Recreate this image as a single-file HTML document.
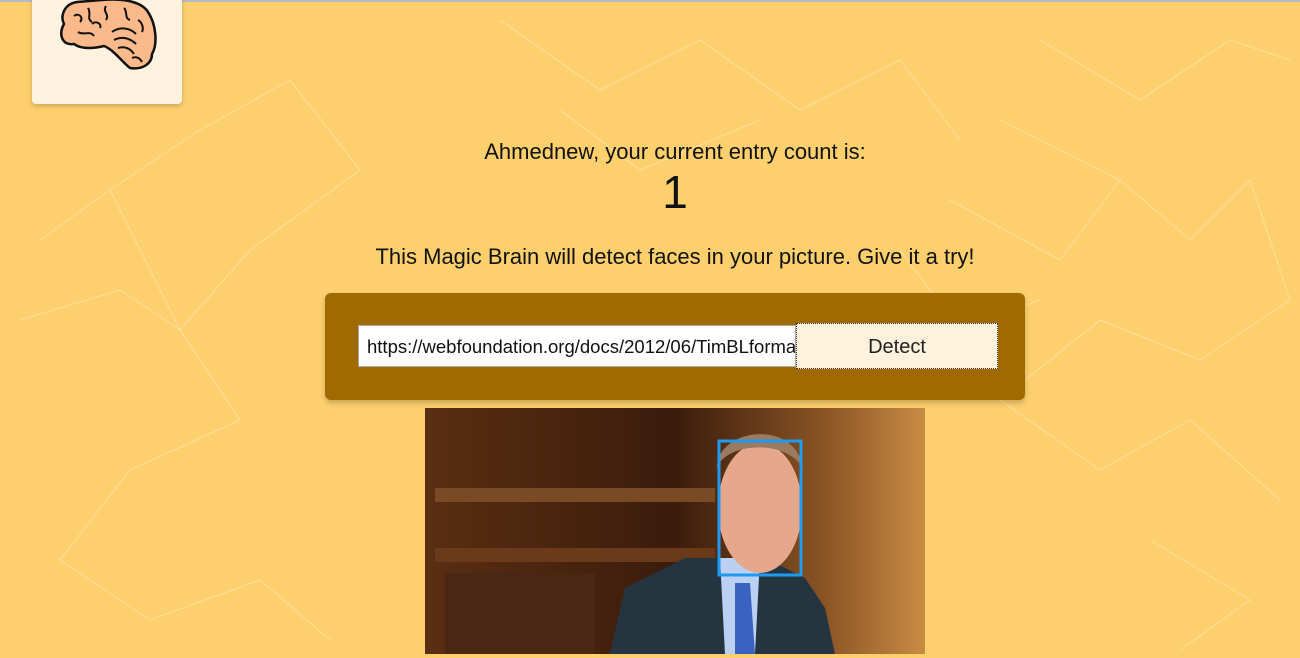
<!DOCTYPE html>
<html><head><meta charset="utf-8"><style>
html,body{margin:0;padding:0;width:1300px;height:658px;overflow:hidden;background:#fdcf6d;font-family:"Liberation Sans",sans-serif;position:relative}
.top{position:absolute;left:0;top:0;width:1300px;height:2px;background:#b9b9c6}
.logo{position:absolute;left:32px;top:-6px;width:150px;height:110px;background:#fff3df;border-radius:4px;box-shadow:0 2px 5px rgba(0,0,0,.2)}
.t{position:absolute;left:50px;width:1250px;text-align:center;color:#111}
.box{position:absolute;left:325px;top:293px;width:700px;height:107px;background:#9f6a00;border-radius:6px;box-shadow:0 3px 6px rgba(0,0,0,.2)}
.inp{position:absolute;left:358px;top:325px;width:438px;height:42px;background:#fff;border:1px solid #aaa;box-sizing:border-box;font-size:18.5px;line-height:42px;padding-left:8px;color:#111;overflow:hidden;white-space:nowrap}
.btn{position:absolute;left:796px;top:323px;width:202px;height:46px;background:#fff2dc;border:1px dotted #333;box-sizing:border-box;font-size:20px;line-height:47px;text-align:center;color:#222}
</style></head><body>
<svg width="1300" height="658" style="position:absolute;left:0;top:0" stroke="#fff" stroke-opacity=".35" fill="none" stroke-width="1">
<path d="M40 240L110 190L180 330L250 250L360 170L290 80L200 130L110 190M20 320L120 290L180 330L240 420L130 470L60 560L150 620L260 580L330 640M1040 40L1140 100L1230 40L1290 60M1000 120L1120 180L1190 240L1250 180L1290 300L1200 360L1100 320L1000 400L1100 470L1190 420L1280 500M950 200L1060 260L1120 180M1150 540L1250 600L1180 650M500 20L600 90L700 40L800 110L900 60L960 140M560 110L640 170L760 120M900 250L960 330L1040 300"/>
</svg>
<div class="top"></div>
<div class="logo">
<svg width="150" height="110" viewBox="0 0 150 110"><path d="M45 8C32 10 28 22 32 30C26 40 30 52 42 50C50 56 64 54 72 52C82 56 88 66 98 74C110 76 120 70 120 60C126 50 124 30 116 18C110 8 92 4 70 6Z" fill="#f9b98b" stroke="#111" stroke-width="2.5"/><g stroke="#111" stroke-width="2" fill="none"><path d="M42 22c5-4 10 2 6 6M56 14c4 6-2 10 4 14M74 12c-4 6 4 8 0 14M92 14c4 4 0 10 6 12M46 38c6 4 12-2 16 4M80 38c8-6 18-4 24 2M82 46c8-4 16-2 22 4M86 54c6-2 12 0 16 6M100 64c4-2 8 0 10 4M106 26c4 2 6 8 4 12M60 30c4-4 10 0 8 4"/></g></svg>
</div>
<div class="t" style="top:139px;font-size:22px">Ahmednew, your current entry count is:</div>
<div class="t" style="top:164px;font-size:46px;line-height:56px">1</div>
<div class="t" style="top:244px;font-size:22px">This Magic Brain will detect faces in your picture. Give it a try!</div>
<div class="box"></div>
<div class="inp">https://webfoundation.org/docs/2012/06/TimBLformal.jpg</div>
<div class="btn">Detect</div>
<svg width="500" height="246" style="position:absolute;left:425px;top:408px">
<defs><linearGradient id="g" x1="0" x2="1"><stop offset="0" stop-color="#5a2e12"/><stop offset=".5" stop-color="#3a1c0c"/><stop offset=".8" stop-color="#8a5424"/><stop offset="1" stop-color="#c98c44"/></linearGradient></defs>
<rect width="500" height="246" fill="url(#g)"/>
<rect x="10" y="80" width="280" height="14" fill="#7a4a24"/>
<rect x="10" y="140" width="280" height="14" fill="#6a3a1a"/>
<rect x="20" y="165" width="150" height="81" fill="#4a2614"/>
<path d="M185 246L200 180L260 150L290 150L340 150L380 170L400 200L410 246Z" fill="#253540"/>
<path d="M295 150L335 150L330 246L300 246Z" fill="#bcd0f4"/>
<path d="M310 175L325 175L330 246L310 246Z" fill="#3a62c0"/>
<ellipse cx="335" cy="100" rx="42" ry="65" fill="#e6a88c"/>
<path d="M292 60C292 20 370 10 378 60C360 30 300 35 292 60Z" fill="#9a7a60"/>
<rect x="294" y="33" width="82" height="134" fill="none" stroke="#1e9af0" stroke-width="3"/>
</svg>
</body></html>
